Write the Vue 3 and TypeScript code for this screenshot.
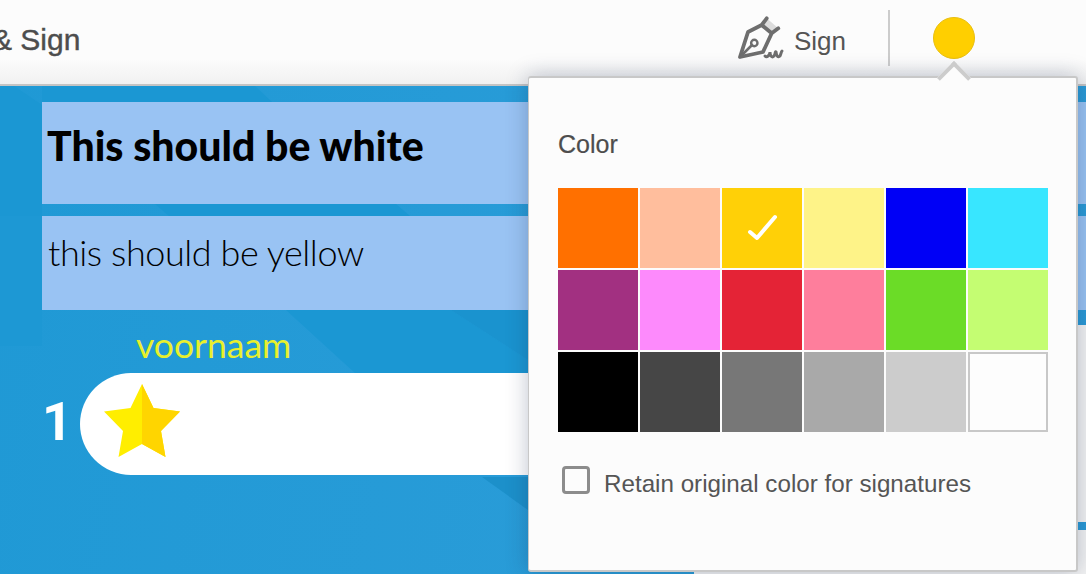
<script setup lang="ts">
const swatches: { color: string; selected?: boolean; outlined?: boolean }[] = [
  { color: '#ff7000' }, { color: '#ffbe9d' }, { color: '#ffd007', selected: true },
  { color: '#fef388' }, { color: '#0000f6' }, { color: '#38e6ff' },
  { color: '#a23081' }, { color: '#fd8afc' }, { color: '#e42336' },
  { color: '#fe7e9c' }, { color: '#6bdc27' }, { color: '#c4fd72' },
  { color: '#000000' }, { color: '#464646' }, { color: '#777777' },
  { color: '#a9a9a9' }, { color: '#cccccc' }, { color: '#fdfdfd', outlined: true },
]
</script>

<template>
  <div class="page">
    <header class="toolbar">
      <span class="title">&amp; Sign</span>
      <div class="tools">
        <button class="sign">
          <svg class="pen" width="50" height="46" viewBox="0 0 50 46" aria-hidden="true">
            <path d="M30.7 3.3 L42.3 13.3 L35.7 18.3 L25.7 10 Z" fill="#dcdcdc" />
            <path d="M30.7 3.3 L25.7 10 L12 17 L4 42 L27 37 L35.7 18.3 L42.3 13.3 M25.7 10 L35.7 18.3" fill="none" stroke="#6e6e6e" stroke-width="3.8" stroke-linejoin="round" stroke-linecap="round" />
            <path d="M5 41 L16 30" fill="none" stroke="#6e6e6e" stroke-width="2.6" stroke-linecap="round" />
            <circle cx="18.3" cy="28" r="3.2" fill="none" stroke="#6e6e6e" stroke-width="2.4" />
            <path d="M29 41 C31 43 34 40 34 37 C34 41 36 43 38 41 C39.5 39 39 36 40 37 C40.5 41 42 43 44 41 C45 39.5 45 37 46 36" fill="none" stroke="#6e6e6e" stroke-width="3" stroke-linecap="round" />
          </svg>
          <span>Sign</span>
        </button>
        <span class="divider"></span>
        <span class="dot"></span>
      </div>
    </header>

    <main class="canvas">
      <svg class="streaks" width="1086" height="488" viewBox="0 0 1086 488" aria-hidden="true">
        <path d="M0 0 L14 0 L42 19 L42 130 L0 130 Z" fill="#1b97d3" />
        <path d="M0 130 L42 130 L42 260 L0 260 Z" fill="#1d98d4" />
        <path d="M42 0 L255 0 L272 16 L42 16 Z" fill="#1b97d3" />
        <path d="M155 118 L396 118 L410 130 L169 130 Z" fill="#1b97d3" />
        <path d="M286 224 L451 224 L528 274 L528 287 L355 287 Z" fill="#1b97d3" />
        <path d="M451 224 L528 224 L528 274 Z" fill="#1a93cf" />
        <path d="M482 391 L528 391 L528 424 Z" fill="#1c90ca" />
      </svg>

      <section class="band band-a">
        <p class="heading">This should be white</p>
      </section>
      <section class="band band-b">
        <p class="sub">this should be yellow</p>
      </section>

      <section class="field-row">
        <div class="field-col">
          <label class="field-label">voornaam</label>
          <div class="field-line">
            <span class="num">1</span>
            <div class="pill">
              <svg class="star" width="78" height="74" viewBox="0 0 78 74" aria-hidden="true">
                <path d="M39 0 L50.5 24 L77 27.5 L58 47 L62.5 73 L39 60 L15.5 73 L20 47 L1 27.5 L27.5 24 Z" fill="#ffee00" />
                <path d="M39 0 L50.5 24 L77 27.5 L58 47 L62.5 73 L39 60 Z" fill="#ffd500" />
              </svg>
            </div>
          </div>
        </div>
        <div class="side-panel"></div>
      </section>

      <div class="lower-panel"></div>

      <aside class="popup">
        <span class="caret"></span>
        <h2 class="popup-title">Color</h2>
        <div class="grid">
          <span
            v-for="s in swatches"
            :key="s.color"
            class="swatch"
            :class="{ outlined: s.outlined }"
            :style="{ backgroundColor: s.color }"
          >
            <svg v-if="s.selected" width="32" height="28" viewBox="0 0 32 28" aria-hidden="true">
              <path d="M4 18 L11 24 L29 3" fill="none" stroke="#fff" stroke-width="4" stroke-linecap="round" stroke-linejoin="round" />
            </svg>
          </span>
        </div>
        <label class="retain">
          <span class="box"></span>
          <span class="retain-text">Retain original color for signatures</span>
        </label>
      </aside>
    </main>
  </div>
</template>

<style>
html, body { margin: 0; overflow: hidden; background: #2699d6; }
</style>

<style scoped>
.page {
  width: 1086px;
  height: 574px;
  overflow: hidden;
  font-family: "Liberation Sans", Arial, sans-serif;
  display: flex;
  flex-direction: column;
}
.toolbar {
  height: 84px;
  flex: none;
  display: flex;
  align-items: center;
  justify-content: space-between;
  background: linear-gradient(#fcfcfc 0 70%, #f1f1f1);
  border-bottom: 2px solid #c4c4c4;
  color: #4d4d4d;
}
.title {
  font-size: 30px;
  margin-left: -8px;
  margin-top: -4px;
  -webkit-text-stroke: 0.4px #4d4d4d;
}
.tools {
  display: flex;
  align-items: center;
  margin-right: 111px;
}
.sign {
  display: flex;
  align-items: center;
  gap: 8px;
  padding: 0;
  border: 0;
  background: none;
  color: #555;
  font: inherit;
  font-size: 26px;
}
.sign span { margin-top: -1px; }
.pen { margin-top: -9px; }
.divider {
  width: 2px;
  height: 56px;
  margin: 0 43px 0 42px;
  background: #cccccc;
  margin-top: -8px;
}
.dot {
  width: 42px;
  height: 42px;
  box-sizing: border-box;
  border-radius: 50%;
  background: #ffcf00;
  border: 1px solid #e9bf10;
  margin-top: -8px;
}
.canvas {
  position: relative;
  flex: 1;
  padding-top: 16px;
  background: linear-gradient(100deg, #1f99d5, #2a9cd8 60%, #2b9ad6);
}
.streaks {
  position: absolute;
  left: 0;
  top: 0;
}
.band {
  position: relative;
  margin-left: 42px;
  background: #99c3f3;
  box-sizing: border-box;
}
.band p { margin: 0; color: #000; font-family: Lato, sans-serif; }
.band-a { height: 102px; padding: 19px 0 0 5px; }
.band-b { height: 94px; margin-top: 12px; padding: 13px 0 0 6px; }
.heading { font-size: 41px; font-weight: 900; line-height: 50px; }
.sub { font-size: 36px; font-weight: 300; line-height: 46px; letter-spacing: -0.43px; }
.field-row {
  position: relative;
  display: flex;
  margin-top: 15px;
}
.field-col { width: 1000px; flex: none; }
.field-label {
  display: block;
  margin: 0 0 0 136px;
  height: 48px;
  font-family: Lato, sans-serif;
  font-size: 35.5px;
  line-height: 40px;
  color: #e8f02c;
}
.field-line {
  display: flex;
  align-items: center;
  padding-left: 42px;
}
.num {
  width: 38px;
  flex: none;
  color: #fff;
  font-family: Roboto, sans-serif;
  font-weight: 700;
  font-size: 53px;
  line-height: 52px;
  margin-top: -4px;
}
.pill {
  flex: 1;
  height: 102px;
  background: #fff;
  border-radius: 51px 0 0 51px;
  display: flex;
  align-items: center;
  padding-left: 23px;
}
.star { margin-top: -6px; }
.side-panel {
  flex: 1;
  height: 197px;
  background: #f3f3f3;
}
.lower-panel {
  position: relative;
  margin: 8px 0 0 694px;
  height: 44px;
  background: #f3f3f3;
}
.popup {
  position: absolute;
  left: 528px;
  top: -10px;
  width: 550px;
  height: 496px;
  box-sizing: border-box;
  padding: 52px 28px 0 29px;
  background: #fcfcfc;
  border: 2px solid #c8c8c8;
  border-left-width: 1px;
  border-radius: 3px;
  box-shadow: 0 0 22px rgba(20, 40, 80, 0.28);
  color: #4d4d4d;
}
.caret {
  position: absolute;
  left: 413px;
  top: -12px;
  width: 24px;
  height: 24px;
  box-sizing: border-box;
  background: #fcfcfc;
  border-top: 4px solid #cccccc;
  border-left: 4px solid #cccccc;
  transform: rotate(45deg);
}
.popup-title {
  margin: 0;
  font-size: 25px;
  font-weight: 400;
  line-height: 28px;
  -webkit-text-stroke: 0.2px #4d4d4d;
}
.grid {
  display: grid;
  grid-template-columns: repeat(6, 80px);
  grid-auto-rows: 80px;
  gap: 2px;
  margin-top: 30px;
}
.swatch {
  display: flex;
  align-items: center;
  justify-content: center;
  box-sizing: border-box;
}
.swatch.outlined { border: 2px solid #c8c8c8; }
.retain {
  display: flex;
  align-items: flex-start;
  gap: 14px;
  margin: 34px 0 0 4px;
  font-size: 24.2px;
  color: #555;
}
.retain-text { line-height: 28px; margin-top: 4px; }
.box {
  width: 28px;
  height: 28px;
  flex: none;
  box-sizing: border-box;
  border: 3px solid #8c8c8c;
  border-radius: 4px;
  background: #fcfcfc;
}
</style>
